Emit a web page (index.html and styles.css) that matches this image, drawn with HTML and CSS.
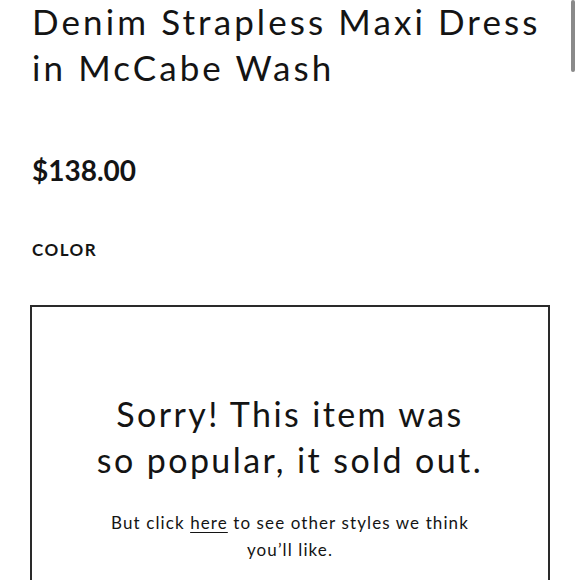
FILE: index.html
```html
<!DOCTYPE html>
<html lang="en">
<head>
<meta charset="utf-8">
<title>Denim Strapless Maxi Dress</title>
<link rel="stylesheet" href="styles.css">
</head>
<body>
<main class="product">
  <h1 class="title"><span class="title-line">Denim Strapless Maxi Dress</span> <span class="title-line">in McCabe Wash</span></h1>
  <div class="price">$138.00</div>
  <div class="label">COLOR</div>
  <section class="soldout">
    <h2 class="soldout-title">Sorry! This item was<br>so popular, it sold out.</h2>
    <p class="soldout-text">But click <a href="#" class="link">here</a> to see other styles we think<br>you’ll like.</p>
  </section>
</main>
<div class="scrollbar"></div>
</body>
</html>
```

FILE: styles.css
```css
html, body {
  margin: 0;
  padding: 0;
  background: #fff;
  overflow: hidden;
}
body {
  font-family: Lato, "Open Sans", sans-serif;
  color: #141414;
}
.product {
  padding: 0 30px;
  display: flex;
  flex-direction: column;
}
.title {
  margin: 0 0 0 2px;
  display: flex;
  flex-direction: column;
  gap: 4px;
  font-size: 35px;
  line-height: 42px;
  font-weight: 400;
  letter-spacing: 3.1px;
  white-space: nowrap;
}
.title-line {
  display: block;
}
.price {
  margin-top: 65px;
  margin-left: 2px;
  font-size: 28px;
  font-weight: 700;
  line-height: 34px;
}
.label {
  margin-top: 53px;
  margin-left: 2px;
  font-size: 17px;
  font-weight: 700;
  letter-spacing: 1.5px;
  line-height: 20px;
}
.soldout {
  margin-top: 45px;
  border: 2px solid #2a2a2a;
  padding: 84px 10px 40px;
  text-align: center;
}
.soldout-title {
  margin: 0;
  font-size: 34px;
  line-height: 46px;
  font-weight: 400;
  letter-spacing: 2.4px;
}
.soldout-text {
  margin: 26px 0 0;
  font-size: 17px;
  line-height: 27px;
  letter-spacing: 1.1px;
}
.link {
  color: inherit;
  text-decoration: underline;
  text-decoration-thickness: 1px;
  text-underline-offset: 3px;
}
.scrollbar {
  position: absolute;
  top: 0;
  right: 5px;
  width: 4px;
  height: 72px;
  background: #8a8a8a;
  border-radius: 2px;
}
```
